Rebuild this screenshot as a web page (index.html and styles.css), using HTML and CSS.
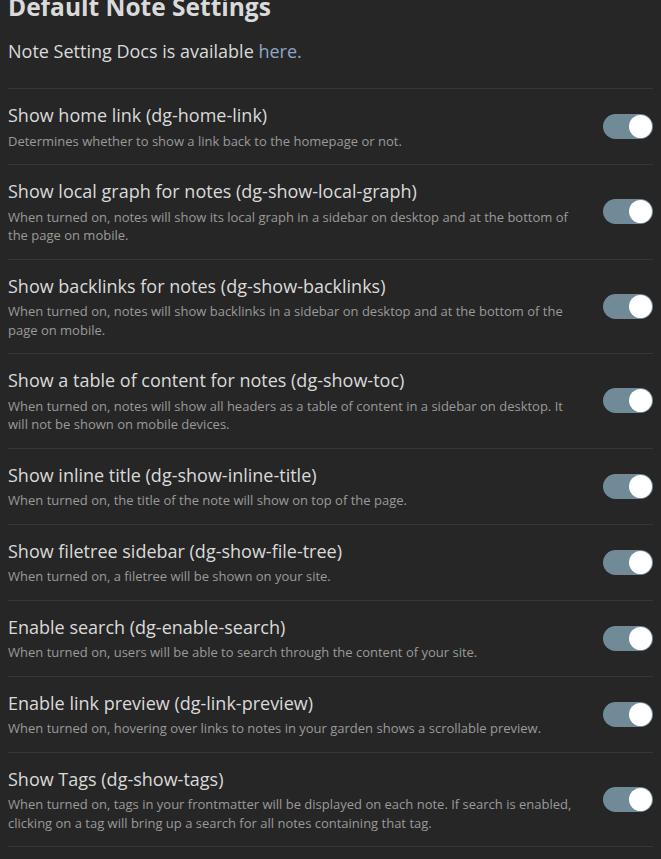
FILE: index.html
```
<!DOCTYPE html>
<html>
<head>
<meta charset="utf-8">
<link rel="stylesheet" href="styles.css">
</head>
<body>
<div class="page">
  <h2 class="title">Default Note Settings</h2>
  <p class="docs">Note Setting Docs is available <a class="link" href="#">here.</a></p>
  <div class="list">
    <div class="item">
      <div class="info">
        <div class="name">Show home link (dg-home-link)</div>
        <div class="desc">Determines whether to show a link back to the homepage or not.</div>
      </div>
      <div class="toggle"><span class="knob"></span></div>
    </div>
    <div class="item">
      <div class="info">
        <div class="name">Show local graph for notes (dg-show-local-graph)</div>
        <div class="desc">When turned on, notes will show its local graph in a sidebar on desktop and at the bottom of the page on mobile.</div>
      </div>
      <div class="toggle"><span class="knob"></span></div>
    </div>
    <div class="item">
      <div class="info">
        <div class="name">Show backlinks for notes (dg-show-backlinks)</div>
        <div class="desc">When turned on, notes will show backlinks in a sidebar on desktop and at the bottom of the page on mobile.</div>
      </div>
      <div class="toggle"><span class="knob"></span></div>
    </div>
    <div class="item">
      <div class="info">
        <div class="name">Show a table of content for notes (dg-show-toc)</div>
        <div class="desc">When turned on, notes will show all headers as a table of content in a sidebar on desktop. It will not be shown on mobile devices.</div>
      </div>
      <div class="toggle"><span class="knob"></span></div>
    </div>
    <div class="item">
      <div class="info">
        <div class="name">Show inline title (dg-show-inline-title)</div>
        <div class="desc">When turned on, the title of the note will show on top of the page.</div>
      </div>
      <div class="toggle"><span class="knob"></span></div>
    </div>
    <div class="item">
      <div class="info">
        <div class="name">Show filetree sidebar (dg-show-file-tree)</div>
        <div class="desc">When turned on, a filetree will be shown on your site.</div>
      </div>
      <div class="toggle"><span class="knob"></span></div>
    </div>
    <div class="item">
      <div class="info">
        <div class="name">Enable search (dg-enable-search)</div>
        <div class="desc">When turned on, users will be able to search through the content of your site.</div>
      </div>
      <div class="toggle"><span class="knob"></span></div>
    </div>
    <div class="item">
      <div class="info">
        <div class="name">Enable link preview (dg-link-preview)</div>
        <div class="desc">When turned on, hovering over links to notes in your garden shows a scrollable preview.</div>
      </div>
      <div class="toggle"><span class="knob"></span></div>
    </div>
    <div class="item">
      <div class="info">
        <div class="name">Show Tags (dg-show-tags)</div>
        <div class="desc">When turned on, tags in your frontmatter will be displayed on each note. If search is enabled, clicking on a tag will bring up a search for all notes containing that tag.</div>
      </div>
      <div class="toggle"><span class="knob"></span></div>
    </div>
  </div>
</div>
</body>
</html>
```
FILE: styles.css
```
html, body {
  margin: 0;
  padding: 0;
  background: #262626;
}
body {
  font-family: "Open Sans", "Noto Sans", sans-serif;
  color: #dadada;
  overflow: hidden;
}
.page {
  padding: 0 8px;
}
.title {
  margin: -8px 0 0 0;
  font-size: 24.5px;
  line-height: 30px;
  font-weight: 700;
  color: #dadada;
}
.docs {
  margin: 16px 0 0 0;
  font-size: 18px;
  line-height: 26px;
}
.link {
  color: #8ea6c6;
  text-decoration: none;
}
.list {
  margin-top: 24px;
  border-bottom: 1px solid #363636;
}
.item {
  display: flex;
  align-items: center;
  border-top: 1px solid #363636;
  padding: 14px 0;
}
.info {
  flex: 1 1 auto;
  margin-right: 18px;
}
.name {
  font-size: 18px;
  line-height: 24px;
  color: #dadada;
}
.desc {
  margin-top: 4.5px;
  font-size: 13px;
  line-height: 18.5px;
  color: #9a9a9a;
}
.toggle {
  flex: 0 0 auto;
  width: 50px;
  height: 25px;
  border-radius: 13px;
  background: #718a98;
  display: flex;
  align-items: center;
  justify-content: flex-end;
  padding-right: 1px;
  box-sizing: border-box;
}
.knob {
  width: 23px;
  height: 23px;
  border-radius: 50%;
  background: #ffffff;
}
```
